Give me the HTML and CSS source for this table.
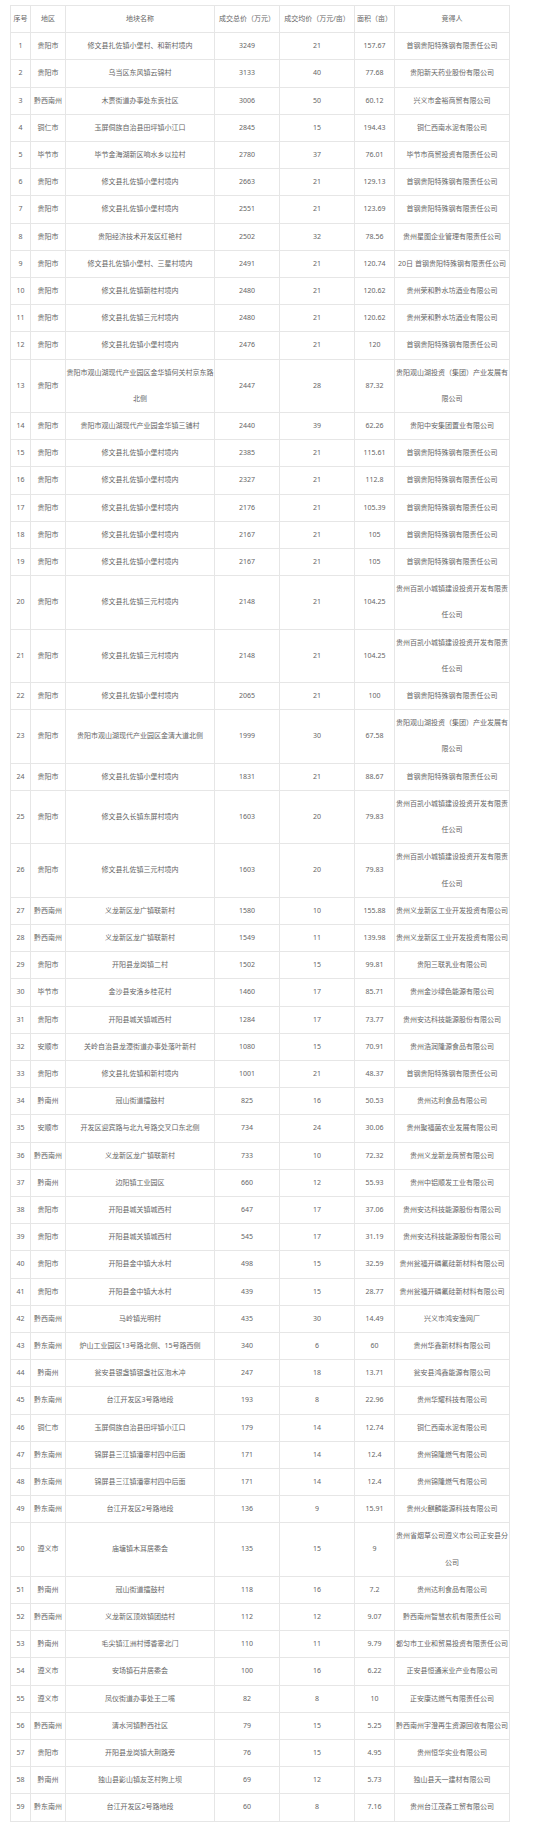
FILE: index.html
```html
<!DOCTYPE html>
<html lang="zh-CN">
<head>
<meta charset="utf-8">
<title>土地成交</title>
<link rel="stylesheet" href="styles.css">
</head>
<body>
<table class="land">
<colgroup>
<col class="c-no"><col class="c-area"><col class="c-name"><col class="c-total"><col class="c-avg"><col class="c-size"><col class="c-buyer">
</colgroup>
<thead>
<tr><th>序号</th><th>地区</th><th>地块名称</th><th>成交总价（万元）</th><th>成交均价（万元/亩）</th><th>面积（亩）</th><th>竞得人</th></tr>
</thead>
<tbody>
<tr><td>1</td><td>贵阳市</td><td>修文县扎佐镇小堡村、和新村境内</td><td>3249</td><td>21</td><td>157.67</td><td>首钢贵阳特殊钢有限责任公司</td></tr>
<tr><td>2</td><td>贵阳市</td><td>乌当区东风镇云锦村</td><td>3133</td><td>40</td><td>77.68</td><td>贵阳新天药业股份有限公司</td></tr>
<tr><td>3</td><td>黔西南州</td><td>木贾街道办事处东贡社区</td><td>3006</td><td>50</td><td>60.12</td><td>兴义市金裕商贸有限公司</td></tr>
<tr><td>4</td><td>铜仁市</td><td>玉屏侗族自治县田坪镇小江口</td><td>2845</td><td>15</td><td>194.43</td><td>铜仁西南水泥有限公司</td></tr>
<tr><td>5</td><td>毕节市</td><td>毕节金海湖新区响水乡以拉村</td><td>2780</td><td>37</td><td>76.01</td><td>毕节市商贸投资有限责任公司</td></tr>
<tr><td>6</td><td>贵阳市</td><td>修文县扎佐镇小堡村境内</td><td>2663</td><td>21</td><td>129.13</td><td>首钢贵阳特殊钢有限责任公司</td></tr>
<tr><td>7</td><td>贵阳市</td><td>修文县扎佐镇小堡村境内</td><td>2551</td><td>21</td><td>123.69</td><td>首钢贵阳特殊钢有限责任公司</td></tr>
<tr><td>8</td><td>贵阳市</td><td>贵阳经济技术开发区红艳村</td><td>2502</td><td>32</td><td>78.56</td><td>贵州星图企业管理有限责任公司</td></tr>
<tr><td>9</td><td>贵阳市</td><td>修文县扎佐镇小堡村、三星村境内</td><td>2491</td><td>21</td><td>120.74</td><td>20日 首钢贵阳特殊钢有限责任公司</td></tr>
<tr><td>10</td><td>贵阳市</td><td>修文县扎佐镇新桂村境内</td><td>2480</td><td>21</td><td>120.62</td><td>贵州荣和黔水坊酒业有限公司</td></tr>
<tr><td>11</td><td>贵阳市</td><td>修文县扎佐镇三元村境内</td><td>2480</td><td>21</td><td>120.62</td><td>贵州荣和黔水坊酒业有限公司</td></tr>
<tr><td>12</td><td>贵阳市</td><td>修文县扎佐镇小堡村境内</td><td>2476</td><td>21</td><td>120</td><td>首钢贵阳特殊钢有限责任公司</td></tr>
<tr><td>13</td><td>贵阳市</td><td>贵阳市观山湖现代产业园区金华镇何关村京东路北侧</td><td>2447</td><td>28</td><td>87.32</td><td>贵阳观山湖投资（集团）产业发展有限公司</td></tr>
<tr><td>14</td><td>贵阳市</td><td>贵阳市观山湖现代产业园金华镇三铺村</td><td>2440</td><td>39</td><td>62.26</td><td>贵阳中安集团置业有限公司</td></tr>
<tr><td>15</td><td>贵阳市</td><td>修文县扎佐镇小堡村境内</td><td>2385</td><td>21</td><td>115.61</td><td>首钢贵阳特殊钢有限责任公司</td></tr>
<tr><td>16</td><td>贵阳市</td><td>修文县扎佐镇小堡村境内</td><td>2327</td><td>21</td><td>112.8</td><td>首钢贵阳特殊钢有限责任公司</td></tr>
<tr><td>17</td><td>贵阳市</td><td>修文县扎佐镇小堡村境内</td><td>2176</td><td>21</td><td>105.39</td><td>首钢贵阳特殊钢有限责任公司</td></tr>
<tr><td>18</td><td>贵阳市</td><td>修文县扎佐镇小堡村境内</td><td>2167</td><td>21</td><td>105</td><td>首钢贵阳特殊钢有限责任公司</td></tr>
<tr><td>19</td><td>贵阳市</td><td>修文县扎佐镇小堡村境内</td><td>2167</td><td>21</td><td>105</td><td>首钢贵阳特殊钢有限责任公司</td></tr>
<tr><td>20</td><td>贵阳市</td><td>修文县扎佐镇三元村境内</td><td>2148</td><td>21</td><td>104.25</td><td>贵州百凯小城镇建设投资开发有限责任公司</td></tr>
<tr><td>21</td><td>贵阳市</td><td>修文县扎佐镇三元村境内</td><td>2148</td><td>21</td><td>104.25</td><td>贵州百凯小城镇建设投资开发有限责任公司</td></tr>
<tr><td>22</td><td>贵阳市</td><td>修文县扎佐镇小堡村境内</td><td>2065</td><td>21</td><td>100</td><td>首钢贵阳特殊钢有限责任公司</td></tr>
<tr><td>23</td><td>贵阳市</td><td>贵阳市观山湖现代产业园区金清大道北侧</td><td>1999</td><td>30</td><td>67.58</td><td>贵阳观山湖投资（集团）产业发展有限公司</td></tr>
<tr><td>24</td><td>贵阳市</td><td>修文县扎佐镇小堡村境内</td><td>1831</td><td>21</td><td>88.67</td><td>首钢贵阳特殊钢有限责任公司</td></tr>
<tr><td>25</td><td>贵阳市</td><td>修文县久长镇东屏村境内</td><td>1603</td><td>20</td><td>79.83</td><td>贵州百凯小城镇建设投资开发有限责任公司</td></tr>
<tr><td>26</td><td>贵阳市</td><td>修文县扎佐镇三元村境内</td><td>1603</td><td>20</td><td>79.83</td><td>贵州百凯小城镇建设投资开发有限责任公司</td></tr>
<tr><td>27</td><td>黔西南州</td><td>义龙新区龙广镇联新村</td><td>1580</td><td>10</td><td>155.88</td><td>贵州义龙新区工业开发投资有限公司</td></tr>
<tr><td>28</td><td>黔西南州</td><td>义龙新区龙广镇联新村</td><td>1549</td><td>11</td><td>139.98</td><td>贵州义龙新区工业开发投资有限公司</td></tr>
<tr><td>29</td><td>贵阳市</td><td>开阳县龙岗镇二村</td><td>1502</td><td>15</td><td>99.81</td><td>贵阳三联乳业有限公司</td></tr>
<tr><td>30</td><td>毕节市</td><td>金沙县安洛乡桂花村</td><td>1460</td><td>17</td><td>85.71</td><td>贵州金沙绿色能源有限公司</td></tr>
<tr><td>31</td><td>贵阳市</td><td>开阳县城关镇城西村</td><td>1284</td><td>17</td><td>73.77</td><td>贵州安达科技能源股份有限公司</td></tr>
<tr><td>32</td><td>安顺市</td><td>关岭自治县龙潭街道办事处落叶新村</td><td>1080</td><td>15</td><td>70.91</td><td>贵州浩润隆源食品有限公司</td></tr>
<tr><td>33</td><td>贵阳市</td><td>修文县扎佐镇和新村境内</td><td>1001</td><td>21</td><td>48.37</td><td>首钢贵阳特殊钢有限责任公司</td></tr>
<tr><td>34</td><td>黔南州</td><td>冠山街道擂鼓村</td><td>825</td><td>16</td><td>50.53</td><td>贵州达利食品有限公司</td></tr>
<tr><td>35</td><td>安顺市</td><td>开发区迎宾路与北九号路交叉口东北侧</td><td>734</td><td>24</td><td>30.06</td><td>贵州聚福菌农业发展有限公司</td></tr>
<tr><td>36</td><td>黔西南州</td><td>义龙新区龙广镇联新村</td><td>733</td><td>10</td><td>72.32</td><td>贵州义龙新龙商贸有限公司</td></tr>
<tr><td>37</td><td>黔南州</td><td>边阳镇工业园区</td><td>660</td><td>12</td><td>55.93</td><td>贵州中铝顺发工业有限公司</td></tr>
<tr><td>38</td><td>贵阳市</td><td>开阳县城关镇城西村</td><td>647</td><td>17</td><td>37.06</td><td>贵州安达科技能源股份有限公司</td></tr>
<tr><td>39</td><td>贵阳市</td><td>开阳县城关镇城西村</td><td>545</td><td>17</td><td>31.19</td><td>贵州安达科技能源股份有限公司</td></tr>
<tr><td>40</td><td>贵阳市</td><td>开阳县金中镇大水村</td><td>498</td><td>15</td><td>32.59</td><td>贵州瓮福开磷氟硅新材料有限公司</td></tr>
<tr><td>41</td><td>贵阳市</td><td>开阳县金中镇大水村</td><td>439</td><td>15</td><td>28.77</td><td>贵州瓮福开磷氟硅新材料有限公司</td></tr>
<tr><td>42</td><td>黔西南州</td><td>马岭镇光明村</td><td>435</td><td>30</td><td>14.49</td><td>兴义市鸿安渔网厂</td></tr>
<tr><td>43</td><td>黔东南州</td><td>炉山工业园区13号路北侧、15号路西侧</td><td>340</td><td>6</td><td>60</td><td>贵州华鑫新材料有限公司</td></tr>
<tr><td>44</td><td>黔南州</td><td>瓮安县银盏镇银盏社区泡木冲</td><td>247</td><td>18</td><td>13.71</td><td>瓮安县鸿鑫能源有限公司</td></tr>
<tr><td>45</td><td>黔东南州</td><td>台江开发区3号路地段</td><td>193</td><td>8</td><td>22.96</td><td>贵州华耀科技有限公司</td></tr>
<tr><td>46</td><td>铜仁市</td><td>玉屏侗族自治县田坪镇小江口</td><td>179</td><td>14</td><td>12.74</td><td>铜仁西南水泥有限公司</td></tr>
<tr><td>47</td><td>黔东南州</td><td>锦屏县三江镇潘寨村四中后面</td><td>171</td><td>14</td><td>12.4</td><td>贵州锦隆燃气有限公司</td></tr>
<tr><td>48</td><td>黔东南州</td><td>锦屏县三江镇潘寨村四中后面</td><td>171</td><td>14</td><td>12.4</td><td>贵州锦隆燃气有限公司</td></tr>
<tr><td>49</td><td>黔东南州</td><td>台江开发区2号路地段</td><td>136</td><td>9</td><td>15.91</td><td>贵州火麒麟能源科技有限公司</td></tr>
<tr><td>50</td><td>遵义市</td><td>庙塘镇木耳居委会</td><td>135</td><td>15</td><td>9</td><td>贵州省烟草公司遵义市公司正安县分公司</td></tr>
<tr><td>51</td><td>黔南州</td><td>冠山街道擂鼓村</td><td>118</td><td>16</td><td>7.2</td><td>贵州达利食品有限公司</td></tr>
<tr><td>52</td><td>黔西南州</td><td>义龙新区顶效镇团结村</td><td>112</td><td>12</td><td>9.07</td><td>黔西南州智慧农机有限责任公司</td></tr>
<tr><td>53</td><td>黔南州</td><td>毛尖镇江洲村博香寨北门</td><td>110</td><td>11</td><td>9.79</td><td>都匀市工业和贸易投资有限责任公司</td></tr>
<tr><td>54</td><td>遵义市</td><td>安场镇石井居委会</td><td>100</td><td>16</td><td>6.22</td><td>正安县恒通米业产业有限公司</td></tr>
<tr><td>55</td><td>遵义市</td><td>凤仪街道办事处王二嘴</td><td>82</td><td>8</td><td>10</td><td>正安康达燃气有限责任公司</td></tr>
<tr><td>56</td><td>黔西南州</td><td>清水河镇黔西社区</td><td>79</td><td>15</td><td>5.25</td><td>黔西南州宇澄再生资源回收有限公司</td></tr>
<tr><td>57</td><td>贵阳市</td><td>开阳县龙岗镇大荆路旁</td><td>76</td><td>15</td><td>4.95</td><td>贵州恒华实业有限公司</td></tr>
<tr><td>58</td><td>黔南州</td><td>独山县影山镇友芝村狗上坝</td><td>69</td><td>12</td><td>5.73</td><td>独山县天一建材有限公司</td></tr>
<tr><td>59</td><td>黔东南州</td><td>台江开发区2号路地段</td><td>60</td><td>8</td><td>7.16</td><td>贵州台江茂森工贸有限公司</td></tr>
</tbody>
</table>
</body>
</html>
```
FILE: styles.css
```css
html, body {
  margin: 0;
  padding: 0;
  background: #ffffff;
}

body {
  padding: 5px 0 0 10px;
}

.land {
  border-collapse: collapse;
  table-layout: fixed;
  width: 499px;
  font-family: "Noto Sans", "Noto Sans CJK SC", sans-serif;
  font-size: 7px;
  color: #666666;
}

.c-no { width: 20px; }
.c-area { width: 35px; }
.c-name { width: 149px; }
.c-total { width: 65px; }
.c-avg { width: 75px; }
.c-size { width: 40px; }
.c-buyer { width: 115px; }

.land th,
.land td {
  border: 1px solid #e6e6e6;
  padding: 0;
  line-height: 26.2px;
  text-align: center;
  vertical-align: middle;
  font-weight: normal;
  white-space: normal;
  word-break: break-all;
}
```
